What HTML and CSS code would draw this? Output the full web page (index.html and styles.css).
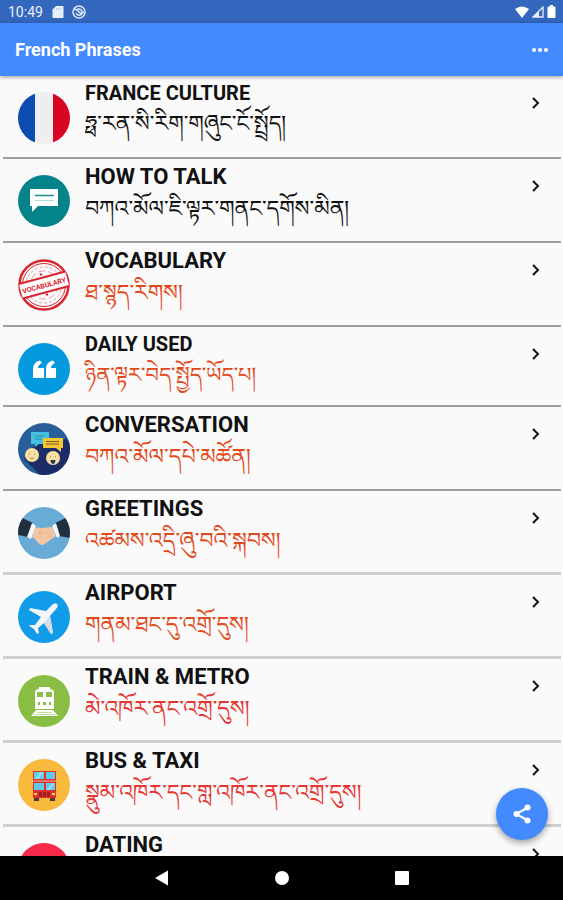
FILE: index.html
```html
<!DOCTYPE html>
<html lang="en">
<head>
    <meta charset="UTF-8">
    <meta name="viewport" content="width=device-width, initial-scale=1.0">
    <title>French Phrases</title>
    <link rel="stylesheet" href="styles.css">
</head>
<body>
    <div class="status-bar">
        <span>10:49</span>
        <svg width="12" height="14" viewBox="0 0 12 14"><path d="M4 1h6.500q1 0 1 1v10q0 1-1 1h-9q-1 0-1-1V4.500z" fill="#e8effb"/><path d="M4.500 3v2M6.500 3v2M8.500 3v2" stroke="#b9cdf0" stroke-width="1"/></svg>
        <svg width="14" height="14" viewBox="0 0 14 14" fill="none" stroke="#dbe6f8" stroke-width="1.500"><circle cx="7" cy="7" r="6"/><path d="M2 4l3 1 5 5M4 8a3.200 3.200 0 0 0 5 1.500M5 4.500a3.300 3.300 0 0 1 5 3.500l2-1"/></svg>
        <div class="signals">
            <svg width="14" height="12" viewBox="0 0 14 12"><path d="M0 3Q7-2 14 3L7 12z" fill="#fff"/></svg>
            <svg width="12" height="12" viewBox="0 0 12 12"><path d="M11 1v10H1z" fill="none" stroke="#e4edfb" stroke-width="1.300"/><path d="M7 5v6H1z" fill="#e4edfb"/></svg>
            <svg width="9" height="13" viewBox="0 0 9 13"><path d="M3 0h3v1.500h1.500q1 0 1 1V12q0 1-1 1h-6q-1 0-1-1V2.500q0-1 1-1H3z" fill="#fff"/></svg>
        </div>
    </div>

    <header class="app-bar">
        <h1>French Phrases</h1>
        <button class="menu-btn" aria-label="More options">
            <svg width="16" height="4" viewBox="0 0 16 4" fill="#fff"><circle cx="2" cy="2" r="2"/><circle cx="8" cy="2" r="2"/><circle cx="14" cy="2" r="2"/></svg>
        </button>
    </header>

    <main class="list">
        <a class="row first" href="#culture">
            <svg class="icon" viewBox="0 0 52 52">
                <clipPath id="flag"><circle cx="26" cy="26" r="26"/></clipPath>
                <g clip-path="url(#flag)"><path d="M0 0h52v52H0z" fill="#eeeeef"/><path d="M0 0h17v52H0z" fill="#0c4bb0"/><path d="M35 0h17v52H35z" fill="#d80525"/></g>
            </svg>
            <div class="text"><h2>FRANCE CULTURE</h2><p lang="bo">ཧྥ་རན་སི་རིག་གཞུང་ངོ་སྤྲོད།</p></div>
            <svg class="chevron" viewBox="0 0 8 12"><path d="M1 1l5 5-5 5"/></svg>
        </a>
        <a class="row" href="#talk">
            <svg class="icon" viewBox="0 0 52 52">
                <circle cx="26" cy="26" r="26" fill="#05838a"/>
                <path d="M12 14h28v17H20l-6 6v-6h-2z" fill="#fff"/>
                <path d="M17 20.500h19" stroke="#168a92" stroke-width="1.500"/><path d="M17 25.500h19" stroke="#b4d8dc"/>
            </svg>
            <div class="text"><h2>HOW TO TALK</h2><p lang="bo">བཀའ་མོལ་ཇི་ལྟར་གནང་དགོས་མིན།</p></div>
            <svg class="chevron" viewBox="0 0 8 12"><path d="M1 1l5 5-5 5"/></svg>
        </a>
        <a class="row orange" href="#vocabulary">
            <svg class="icon" viewBox="0 0 52 52">
                <g fill="none" stroke="#d9232f">
                    <circle cx="26" cy="26" r="24.500" stroke-width="2.500"/>
                    <circle cx="26" cy="26" r="21.500" stroke-width="1"/>
                    <circle cx="26" cy="26" r="18" stroke="#e99a9e" stroke-dasharray="3 2"/>
                    <circle cx="26" cy="26" r="14" stroke="#e99a9e" stroke-dasharray="7 3"/>
                </g>
                <g transform="rotate(-15 26 26)">
                    <path d="M2 18h48v16H2z" fill="#fff"/>
                    <path d="M2 18.500h48M2 33.500h48" stroke="#d9232f" stroke-width="2"/>
                    <text class="stamp" x="26" y="29" text-anchor="middle">VOCABULARY</text>
                </g>
                <path d="M23 14l1.500 1.500L23 17l-1.500-1.500zM29 34l1.500 1.500L29 37l-1.500-1.500z" fill="#d9232f"/>
            </svg>
            <div class="text"><h2>VOCABULARY</h2><p lang="bo">ཐ་སྙད་རིགས།</p></div>
            <svg class="chevron" viewBox="0 0 8 12"><path d="M1 1l5 5-5 5"/></svg>
        </a>
        <a class="row small orange" href="#daily">
            <svg class="icon" viewBox="0 0 52 52">
                <circle cx="26" cy="26" r="26" fill="#0498df"/>
                <path d="M15 35V26q0-7 7-8.500l2 2.500q-4 2-4 5h6v10zM28 35V26q0-7 7-8.500l2 2.500q-4 2-4 5h5v10z" fill="#fff"/>
            </svg>
            <div class="text"><h2>DAILY USED</h2><p lang="bo">ཉིན་ལྟར་བེད་སྤྱོད་ཡོད་པ།</p></div>
            <svg class="chevron" viewBox="0 0 8 12"><path d="M1 1l5 5-5 5"/></svg>
        </a>
        <a class="row orange" href="#conversation">
            <svg class="icon" viewBox="0 0 52 52">
                <clipPath id="chat"><circle cx="26" cy="26" r="26"/></clipPath>
                <circle cx="26" cy="26" r="26" fill="#285f98"/>
                <path clip-path="url(#chat)" d="M6 36L17 22l6-3 17 6 8-10 4 5v32H22z" fill="#1b2c66"/>
                <path d="M13 9h18v6h-3v6h-7l-4 3v-3h-4z" fill="#44bfdc"/>
                <path d="M17 13h9M17 16h7" stroke="#278baf"/>
                <path d="M25 15h20v10h-2v4l-5-4H25z" fill="#fac632"/>
                <path d="M28 18.500h13M28 21h13" stroke="#755d36"/>
                <circle cx="14" cy="32" r="7" fill="#f8e0a1"/><circle cx="35" cy="35" r="7" fill="#f8e0a1"/>
                <path d="M11 31h1M16 31h1M12 35q2 1 4 0M32 34h1M37 34h1" stroke="#a98551" fill="none"/>
                <path d="M32.500 37h5q-.5 4-2.500 4t-2.500-4" fill="#273360"/>
            </svg>
            <div class="text"><h2>CONVERSATION</h2><p lang="bo">བཀའ་མོལ་དཔེ་མཚོན།</p></div>
            <svg class="chevron" viewBox="0 0 8 12"><path d="M1 1l5 5-5 5"/></svg>
        </a>
        <a class="row light orange" href="#greetings">
            <svg class="icon" viewBox="0 0 52 52">
                <clipPath id="shake"><circle cx="26" cy="26" r="26"/></clipPath>
                <g clip-path="url(#shake)">
                    <path d="M0 0h52v52H0z" fill="#67abd6"/>
                    <path d="M0 9l15 7-5 14-10-2z" fill="#20303e"/><path d="M52 9l-15 7 4 13 11 2z" fill="#20303e"/>
                    <path d="M14 16l4 3-5 13-4-2zM38 16l-4 3 5 12 3-2z" fill="#f5f7fa"/>
                    <path d="M17 21q4-1 7 0l10-1 4 9-7 5-6 4q-4 0-7-5l-4-3z" fill="#f2c6a3"/>
                    <path d="M24 22l-3 4q3 2 6-1l7 5" fill="none" stroke="#e3ad8a" stroke-width="1"/>
                </g>
            </svg>
            <div class="text"><h2>GREETINGS</h2><p lang="bo">འཚམས་འདྲི་ཞུ་བའི་སྐབས།</p></div>
            <svg class="chevron" viewBox="0 0 8 12"><path d="M1 1l5 5-5 5"/></svg>
        </a>
        <a class="row light orange" href="#airport">
            <svg class="icon" viewBox="0 0 52 52">
                <circle cx="26" cy="26" r="26" fill="#109ce9"/>
                <path d="M39 13q2 2-1 5l-6 7 3 17-2 1-7-11-6 5 1 5-2 1-3-5-5-3 1-1 5 0 6-8-12-7 1-2 16 3 6-6q3-3 5-1z" fill="#f4f5f6"/>
                <path d="M32 25l3 17-2 1-7-11z" fill="#d5dce2"/>
            </svg>
            <div class="text"><h2>AIRPORT</h2><p lang="bo">གནམ་ཐང་དུ་འགྲོ་དུས།</p></div>
            <svg class="chevron" viewBox="0 0 8 12"><path d="M1 1l5 5-5 5"/></svg>
        </a>
        <a class="row light red" href="#train">
            <svg class="icon" viewBox="0 0 52 52">
                <circle cx="26" cy="26" r="26" fill="#8abd43"/>
                <path d="M21 12h11v2q4 0 4 4v16H17V18q0-4 4-4z" fill="#fff"/>
                <path d="M19 17h6v5h-6zM28 17h6v5h-6zM20 27h2v3h-2zM25 27h3v3h-3zM31 27h2v3h-2z" fill="#8abd43"/>
                <path d="M18 35h17l5 6H13z" fill="#fff"/><path d="M19 37.500h15M16 39.500h21" stroke="#c3dea0"/>
            </svg>
            <div class="text"><h2>TRAIN &amp; METRO</h2><p lang="bo">མེ་འཁོར་ནང་འགྲོ་དུས།</p></div>
            <svg class="chevron" viewBox="0 0 8 12"><path d="M1 1l5 5-5 5"/></svg>
        </a>
        <a class="row light red" href="#bus">
            <svg class="icon" viewBox="0 0 52 52">
                <circle cx="26" cy="26" r="26" fill="#f8b93c"/>
                <path d="M16 38h5v4h-5zM32 38h5v4h-5z" fill="#493936"/>
                <path d="M15 12h23v27H15z" fill="#df302c"/><path d="M15 22h23" stroke="#f7b0a2"/>
                <path d="M16 13h10v7H16zM28 13h9v7h-9zM16 24h10v7H16zM28 24h9v7h-9z" fill="#5ecbed"/>
                <path d="M22 13h4l-5 7h-4zM34 24h3l-5 7h-4z" fill="#8be0f5"/>
                <path d="M21 33h3v5h-3zM25 33h3v5h-3zM29 33h3v5h-3z" fill="#9e2025"/><path d="M16 35h3M34 35h3" stroke="#ffd867" stroke-width="2"/>
            </svg>
            <div class="text"><h2>BUS &amp; TAXI</h2><p lang="bo">སྣུམ་འཁོར་དང་གླ་འཁོར་ནང་འགྲོ་དུས།</p></div>
            <svg class="chevron" viewBox="0 0 8 12"><path d="M1 1l5 5-5 5"/></svg>
        </a>
        <a class="row light red" href="#dating">
            <svg class="icon" viewBox="0 0 52 52"><circle cx="26" cy="26" r="26" fill="#f52a4a"/></svg>
            <div class="text"><h2>DATING</h2></div>
            <svg class="chevron" viewBox="0 0 8 12"><path d="M1 1l5 5-5 5"/></svg>
        </a>
    </main>

    <button class="fab" aria-label="Share">
        <svg width="18" height="20" viewBox="0 0 18 20"><path d="M15 3.500L3 10l12 6.500" fill="none" stroke="#fff" stroke-width="2"/><g fill="#fff"><circle cx="14.500" cy="3.500" r="3"/><circle cx="3.500" cy="10" r="3"/><circle cx="14.500" cy="16.500" r="3"/></g></svg>
    </button>

    <nav class="nav-bar">
        <button aria-label="Back"><svg width="16" height="16" viewBox="0 0 16 16"><path d="M1 8L14 0.500v15z" fill="#fff"/></svg></button>
        <button aria-label="Home"><svg width="16" height="16" viewBox="0 0 16 16"><circle cx="8" cy="8" r="7" fill="#fff"/></svg></button>
        <button aria-label="Recent apps"><svg width="16" height="16" viewBox="0 0 16 16"><rect x="1" y="1" width="14" height="14" rx="1" fill="#fff"/></svg></button>
    </nav>
</body>
</html>
```
FILE: styles.css
```css
* {
    box-sizing: border-box;
}

body {
    margin: 0;
    height: 100vh;
    display: flex;
    flex-direction: column;
    position: relative;
    overflow: hidden;
    font-family: Roboto, sans-serif;
    background-color: #fafafa;
    color: #111;
}

button {
    display: flex;
    align-items: center;
    justify-content: center;
    padding: 0;
    border: none;
    background: none;
    cursor: pointer;
}

.status-bar {
    flex: none;
    height: 23px;
    padding: 0 7px 0 8px;
    display: flex;
    align-items: center;
    gap: 8px;
    background-color: #3467be;
    color: #e8effb;
    font-size: 14px;
}

.status-bar span {
    margin-right: 1px;
}

.signals {
    margin-left: auto;
    display: flex;
    align-items: center;
    gap: 3px;
}

.app-bar {
    flex: none;
    height: 53px;
    padding: 0 15px;
    display: flex;
    align-items: center;
    justify-content: space-between;
    background-color: #448aff;
    color: white;
    box-shadow: 0 1px 4px rgba(0, 0, 0, 0.4);
    z-index: 1;
}

.app-bar h1 {
    margin: 0;
    font-size: 18px;
    font-weight: 700;
}

.menu-btn {
    height: 40px;
}

.list {
    flex: 1;
    min-height: 0;
    overflow: hidden;
    padding: 0 2px 0 3px;
}

.row {
    height: 84px;
    padding: 0 21px 0 15px;
    display: flex;
    gap: 15px;
    border-bottom: 2px solid #9f9f9f;
    color: #111;
    text-decoration: none;
}

.row.first {
    height: 83px;
}

.row.small {
    height: 80px;
}

.row.light {
    border-bottom: 3px solid #cfcfcf;
}

.icon {
    flex: none;
    width: 52px;
    height: 52px;
    margin-top: 16px;
}

.stamp {
    font-size: 7px;
    font-weight: 700;
    fill: #d9232f;
}

.text {
    flex: 1;
    min-width: 0;
    padding-top: 5px;
}

.text h2 {
    margin: 0;
    font-size: 22px;
    font-weight: 700;
    line-height: 26px;
}

.first h2,
.small h2 {
    font-size: 20px;
    line-height: 24px;
}

.text p {
    margin: 7px 0 0;
    font-family: "Noto Serif Tibetan", "Noto Sans Tibetan", Roboto, serif;
    font-size: 22px;
    line-height: 36px;
    white-space: nowrap;
}

.small p {
    font-size: 21px;
}

.orange p {
    color: #e24a1c;
}

.red p {
    color: #e53632;
}

.chevron {
    flex: none;
    width: 8px;
    height: 12px;
    margin-top: 21px;
    fill: none;
    stroke: #111;
    stroke-width: 2;
}

.fab {
    position: absolute;
    right: 15px;
    bottom: 60px;
    width: 52px;
    height: 52px;
    border-radius: 50%;
    background-color: #448aff;
    box-shadow: 0 3px 6px rgba(0, 0, 0, 0.35);
}

.nav-bar {
    flex: none;
    height: 44px;
    display: flex;
    align-items: center;
    justify-content: center;
    background-color: black;
}

.nav-bar button {
    width: 120px;
    height: 44px;
}
```
